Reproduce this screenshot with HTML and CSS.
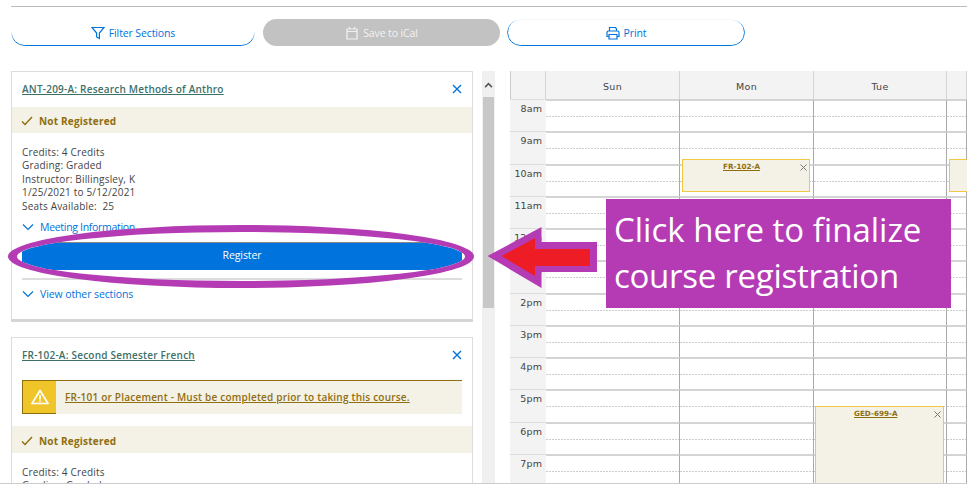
FILE: index.html
```html
<!DOCTYPE html>
<html>
    <head>
        <title>Section Planning</title>
        <meta name="viewport" content="width=device-width, initial-scale=1" />
        <meta charset="utf-8" />
        <link rel="stylesheet" href="styles.css">
    </head>
    <body>
        <div class="page">
            <div class="topLine"></div>

            <div class="toolbar">
                <div class="toolBtn filterBtn">
                    <svg class="toolIcon" viewBox="0 0 14 14"><path d="M1 1.500h12L8.400 7v5.500l-2.800-1.600V7z"/></svg>
                    Filter Sections
                </div>
                <div class="toolBtn icalBtn">
                    <svg class="toolIcon" viewBox="0 0 14 14"><path d="M2 3h10v10H2zM2 5.500h10M4.500 1v2M9.500 1v2"/></svg>
                    Save to iCal
                </div>
                <div class="toolBtn printBtn">
                    <svg class="toolIcon" viewBox="0 0 14 14"><path d="M3.500 5V1.500h6L10.500 3v2M2.500 10.500H1V6.500q0-1.500 1.500-1.500h9q1.500 0 1.500 1.500v4h-1.500M3 8.500h8v4.500H3z"/></svg>
                    Print
                </div>
            </div>

            <div class="main">
                <div class="sections">
                    <div class="card">
                        <div class="cardHead">
                            <a class="cardTitle">ANT-209-A: Research Methods of Anthro</a>
                            <svg class="closeIcon" viewBox="0 0 10 10"><path d="M1 1l8 8M9 1l-8 8"/></svg>
                        </div>
                        <div class="status">
                            <svg class="checkIcon" viewBox="0 0 12 10"><path d="M1 5.500l3 3L11 1"/></svg>
                            Not Registered
                        </div>
                        <div class="cardBody">
                            <div class="info">
                                <div>Credits: 4 Credits</div>
                                <div>Grading: Graded</div>
                                <div>Instructor: Billingsley, K</div>
                                <div>1/25/2021 to 5/12/2021</div>
                                <div>Seats Available:&nbsp; 25</div>
                            </div>
                            <div class="toggle meeting">
                                <svg class="chevron" viewBox="0 0 12 8"><path d="M1 1.500l5 5 5-5"/></svg>
                                Meeting Information
                            </div>
                            <div class="registerBtn">Register</div>
                            <div class="divider"></div>
                            <div class="toggle otherSections">
                                <svg class="chevron" viewBox="0 0 12 8"><path d="M1 1.500l5 5 5-5"/></svg>
                                View other sections
                            </div>
                        </div>
                    </div>

                    <div class="card">
                        <div class="cardHead">
                            <a class="cardTitle">FR-102-A: Second Semester French</a>
                            <svg class="closeIcon" viewBox="0 0 10 10"><path d="M1 1l8 8M9 1l-8 8"/></svg>
                        </div>
                        <div class="warning">
                            <div class="warningIcon">
                                <svg viewBox="0 0 18 16"><path class="warnTri" d="M9 1.500L17 14.500H1z"/><path class="warnMark" d="M9 6v4.500M9 11.500v1.500"/></svg>
                            </div>
                            <a class="warningText">FR-101 or Placement - Must be completed prior to taking this course.</a>
                        </div>
                        <div class="status">
                            <svg class="checkIcon" viewBox="0 0 12 10"><path d="M1 5.500l3 3L11 1"/></svg>
                            Not Registered
                        </div>
                        <div class="cardBody">
                            <div class="info">
                                <div>Credits: 4 Credits</div>
                                <div>Grading: Graded</div>
                            </div>
                        </div>
                    </div>
                </div>

                <div class="scrollbar">
                    <div class="scrollUp">
                        <svg viewBox="0 0 10 7"><path d="M1 6l4-4 4 4"/></svg>
                    </div>
                    <div class="scrollThumb"></div>
                </div>

                <div class="calendar">
                    <div class="calHead">
                        <div></div><div>Sun</div><div>Mon</div><div>Tue</div><div></div>
                    </div>
                    <div class="calRow"><div class="time">8am</div><div class="slot"></div><div class="slot"></div><div class="slot"></div><div class="slot"></div></div>
                    <div class="calRow"><div class="time">9am</div><div class="slot"></div><div class="slot"></div><div class="slot"></div><div class="slot"></div></div>
                    <div class="calRow"><div class="time">10am</div><div class="slot"></div><div class="slot"></div><div class="slot"></div><div class="slot"></div></div>
                    <div class="calRow"><div class="time">11am</div><div class="slot"></div><div class="slot"></div><div class="slot"></div><div class="slot"></div></div>
                    <div class="calRow"><div class="time">12pm</div><div class="slot"></div><div class="slot"></div><div class="slot"></div><div class="slot"></div></div>
                    <div class="calRow"><div class="time">1pm</div><div class="slot"></div><div class="slot"></div><div class="slot"></div><div class="slot"></div></div>
                    <div class="calRow"><div class="time">2pm</div><div class="slot"></div><div class="slot"></div><div class="slot"></div><div class="slot"></div></div>
                    <div class="calRow"><div class="time">3pm</div><div class="slot"></div><div class="slot"></div><div class="slot"></div><div class="slot"></div></div>
                    <div class="calRow"><div class="time">4pm</div><div class="slot"></div><div class="slot"></div><div class="slot"></div><div class="slot"></div></div>
                    <div class="calRow"><div class="time">5pm</div><div class="slot"></div><div class="slot"></div><div class="slot"></div><div class="slot"></div></div>
                    <div class="calRow"><div class="time">6pm</div><div class="slot"></div><div class="slot"></div><div class="slot"></div><div class="slot"></div></div>
                    <div class="calRow"><div class="time">7pm</div><div class="slot"></div><div class="slot"></div><div class="slot"></div><div class="slot"></div></div>

                    <div class="event eventMon">
                        <a class="eventName">FR-102-A</a>
                        <svg class="eventClose" viewBox="0 0 7 7"><path d="M.5 .5l6 6M6.500 .5l-6 6"/></svg>
                    </div>
                    <div class="event eventWed"></div>
                    <div class="event eventTue">
                        <a class="eventName">GED-699-A</a>
                        <svg class="eventClose" viewBox="0 0 7 7"><path d="M.5 .5l6 6M6.500 .5l-6 6"/></svg>
                    </div>
                </div>
            </div>

            <!-- annotation drawn on top of the screenshot -->
            <svg class="annotation" viewBox="0 0 967 484">
                <path class="ring" fill-rule="evenodd" d="M8 256.500a233 31.500 0 1 0 466 0a233 31.500 0 1 0 -466 0zM17 256.500a224 24.500 0 1 0 448 0a224 24.500 0 1 0 -448 0z"/>
                <polygon class="ring" points="487.500,256 541.500,227 541.500,242 597,242 597,272 541.500,272 541.500,288"/>
                <polygon class="arrowRed" points="501.500,256 535,238 535,249 590,249 590,266 535,266 535,276"/>
            </svg>
            <div class="callout">Click here to finalize <span class="calloutEnd">course registration</span></div>
        </div>
    </body>
</html>
```

FILE: styles.css
```css
html, body {
    margin: 0;
    padding: 0;
    background: #fff;
}
.page {
    position: relative;
    width: 967px;
    height: 484px;
    box-sizing: border-box;
    overflow: hidden;
    border-bottom: 1px solid #ccc;
    font-family: "Open Sans", sans-serif;
}
.topLine {
    height: 1px;
    margin: 6px 0 0 11px;
    background: #bbb;
}

/* toolbar */
.toolbar {
    display: flex;
    margin: 12px 0 0 11px;
    height: 27px;
}
.toolBtn {
    position: relative;
    display: flex;
    align-items: center;
    justify-content: center;
    gap: 4px;
    box-sizing: border-box;
    border-radius: 14px;
    font-size: 10.500px;
    letter-spacing: -0.12px;
    color: #0073dc;
}
.toolIcon {
    width: 14px;
    height: 14px;
    fill: none;
    stroke: currentColor;
    stroke-width: 1.2;
}
/* outline fades out towards the top of the button */
.filterBtn::before, .printBtn::before {
    content: "";
    position: absolute;
    inset: 0;
    border: 1px solid #0073dc;
    border-radius: 14px;
}
.filterBtn::before {
    -webkit-mask-image: linear-gradient(transparent 45%, #000 85%);
    mask-image: linear-gradient(transparent 45%, #000 85%);
}
.printBtn::before {
    -webkit-mask-image: linear-gradient(transparent 0, #000 40%);
    mask-image: linear-gradient(transparent 0, #000 40%);
}
.filterBtn {
    width: 244px;
}
.icalBtn {
    width: 237px;
    margin-left: 8px;
    background: #c2c2c2;
    color: #f2f2f2;
}
.printBtn {
    width: 238px;
    margin-left: 7px;
}

/* main columns */
.main {
    display: flex;
    margin: 25px 0 0 11px;
}
.sections {
    width: 462px;
    flex: none;
}
.card {
    box-sizing: border-box;
    border: 1px solid #ddd;
    border-bottom: 3px solid #d5d5d5;
    margin-bottom: 15px;
}
.cardHead {
    display: flex;
    align-items: center;
    justify-content: space-between;
    box-sizing: border-box;
    height: 35px;
    padding: 0 10px 2px;
}
.cardTitle {
    font-size: 10px;
    font-weight: 600;
    letter-spacing: 0.22px;
    color: #3d7068;
    text-decoration: underline;
}
.closeIcon {
    width: 10px;
    height: 10px;
    fill: none;
    stroke: #0073dc;
    stroke-width: 1.4;
}
.status {
    display: flex;
    align-items: center;
    gap: 6px;
    box-sizing: border-box;
    height: 26px;
    padding: 2px 0 0 9px;
    background: #f4f1e6;
    font-size: 10px;
    font-weight: 700;
    letter-spacing: 0.2px;
    color: #8f6e0f;
}
.warning + .status {
    height: 27px;
}
.checkIcon {
    width: 12px;
    height: 10px;
    fill: none;
    stroke: #8f6e0f;
    stroke-width: 1.4;
}
.cardBody {
    padding: 13px 10px 0;
}
.info {
    font-size: 10px;
    line-height: 13.400px;
    letter-spacing: 0.18px;
    color: #444;
}
.toggle {
    display: flex;
    align-items: center;
    gap: 6px;
    height: 16px;
    font-size: 10.500px;
    letter-spacing: -0.1px;
    color: #0073dc;
}
.meeting {
    margin-top: 6px;
    letter-spacing: -0.3px;
}
.otherSections {
    margin-bottom: 17px;
}
.chevron {
    width: 12px;
    height: 8px;
    fill: none;
    stroke: #0073dc;
    stroke-width: 1.2;
}
.registerBtn {
    display: flex;
    align-items: center;
    justify-content: center;
    box-sizing: border-box;
    height: 28px;
    margin-top: 7px;
    padding-bottom: 3px;
    border-top: 1px solid #888;
    background: #0073dc;
    clip-path: ellipse(224px 24.500px at 219px 14.500px);
    font-size: 10.500px;
    letter-spacing: -0.1px;
    color: #fff;
}
.divider {
    height: 2px;
    margin: 8px 0 6px;
    background: #ddd;
}

/* prerequisite warning */
.warning {
    display: flex;
    align-items: center;
    height: 34px;
    margin: 7px 10px 12px;
    box-sizing: border-box;
    border-top: 1px solid #8f6e0f;
    background: #f4f1e6;
}
.warningIcon {
    display: flex;
    align-items: center;
    justify-content: center;
    box-sizing: border-box;
    width: 34px;
    height: 34px;
    margin-top: -1px;
    border: 1px solid #8f6e0f;
    border-right: 0;
    background: #f0c52a;
}
.warningIcon svg {
    width: 18px;
    height: 16px;
}
.warnTri {
    fill: none;
    stroke: #fff;
    stroke-width: 1.700;
    stroke-linejoin: round;
}
.warnMark {
    fill: none;
    stroke: #fff;
    stroke-width: 1.800;
}
.warningText {
    margin: -2px 0 0 9px;
    font-size: 10px;
    font-weight: 600;
    letter-spacing: 0.215px;
    color: #8f6e0f;
    text-decoration: underline;
}

/* scrollbar */
.scrollbar {
    flex: none;
    width: 13px;
    height: 413px;
    margin-left: 9px;
    padding: 0 1px;
    box-sizing: border-box;
    background: #f0f0f0;
}
.scrollUp {
    display: flex;
    align-items: center;
    justify-content: center;
    box-sizing: border-box;
    height: 26px;
    padding-top: 2px;
}
.scrollUp svg {
    width: 9px;
    height: 6px;
    fill: none;
    stroke: #555;
    stroke-width: 1.800;
}
.scrollThumb {
    height: 211px;
    background: #c8c8c8;
}

/* calendar */
.calendar {
    position: relative;
    flex: none;
    width: 457px;
    margin-left: 15px;
    font-family: "DejaVu Sans", sans-serif;
    font-size: 9.500px;
    color: #444;
}
.calHead, .calRow {
    display: grid;
    grid-template-columns: 36px 134px 134px 133px 20px;
}
.calHead {
    height: 28px;
    background: #f3f3f3;
    box-shadow: inset 1px 0 0 #ccc;
    letter-spacing: 0.3px;
}
.calHead div {
    display: flex;
    align-items: center;
    justify-content: center;
    padding-top: 2px;
    border-right: 1px solid #d4d4d4;
}
.calRow {
    height: 32.250px;
}
.time {
    padding: 3px 4px 0 0;
    text-align: right;
    background: #f3f3f3;
    border-top: 1px solid #ddd;
    letter-spacing: 0.1px;
}
.slot {
    position: relative;
    box-sizing: border-box;
    border-top: 2px solid #d4d4d4;
    border-right: 1px solid #aaa;
}
.slot::after {
    content: "";
    position: absolute;
    left: 0;
    right: 0;
    top: 15px;
    height: 1px;
    background: repeating-linear-gradient(90deg, #ccc 0 2px, transparent 2px 3px);
}

/* events sit over the grid */
.event {
    position: absolute;
    box-sizing: border-box;
    border: 1px solid #f0c842;
    background: #f4f1e6;
    z-index: 1;
}
.eventMon {
    left: 172px;
    top: 88px;
    width: 128px;
    height: 33px;
}
.eventWed {
    left: 439px;
    top: 88px;
    width: 30px;
    height: 33px;
}
.eventTue {
    left: 305px;
    top: 335px;
    width: 129px;
    height: 90px;
}
.eventName {
    position: absolute;
    top: 2px;
    left: 40px;
    font-size: 7.200px;
    font-weight: 700;
    color: #8f6e0f;
    text-decoration: underline;
}
.eventTue .eventName {
    left: 38px;
}
.eventClose {
    position: absolute;
    top: 4px;
    right: 2px;
    width: 7px;
    height: 7px;
    fill: none;
    stroke: #777;
    stroke-width: 1;
}

/* annotation */
.annotation {
    position: absolute;
    left: 0;
    top: 0;
    width: 967px;
    height: 484px;
    z-index: 2;
}
.ring {
    fill: #b53bb5;
}
.arrowRed {
    fill: #ee1c25;
}
.callout {
    position: absolute;
    left: 606px;
    top: 199px;
    z-index: 3;
    box-sizing: border-box;
    width: 345px;
    height: 109px;
    padding: 8px 8px 0;
    background: #b53bb5;
    font-family: "Open Sans", sans-serif;
    font-size: 33px;
    line-height: 46px;
    color: #fff;
}
.calloutEnd {
    letter-spacing: -0.27px;
}
```
